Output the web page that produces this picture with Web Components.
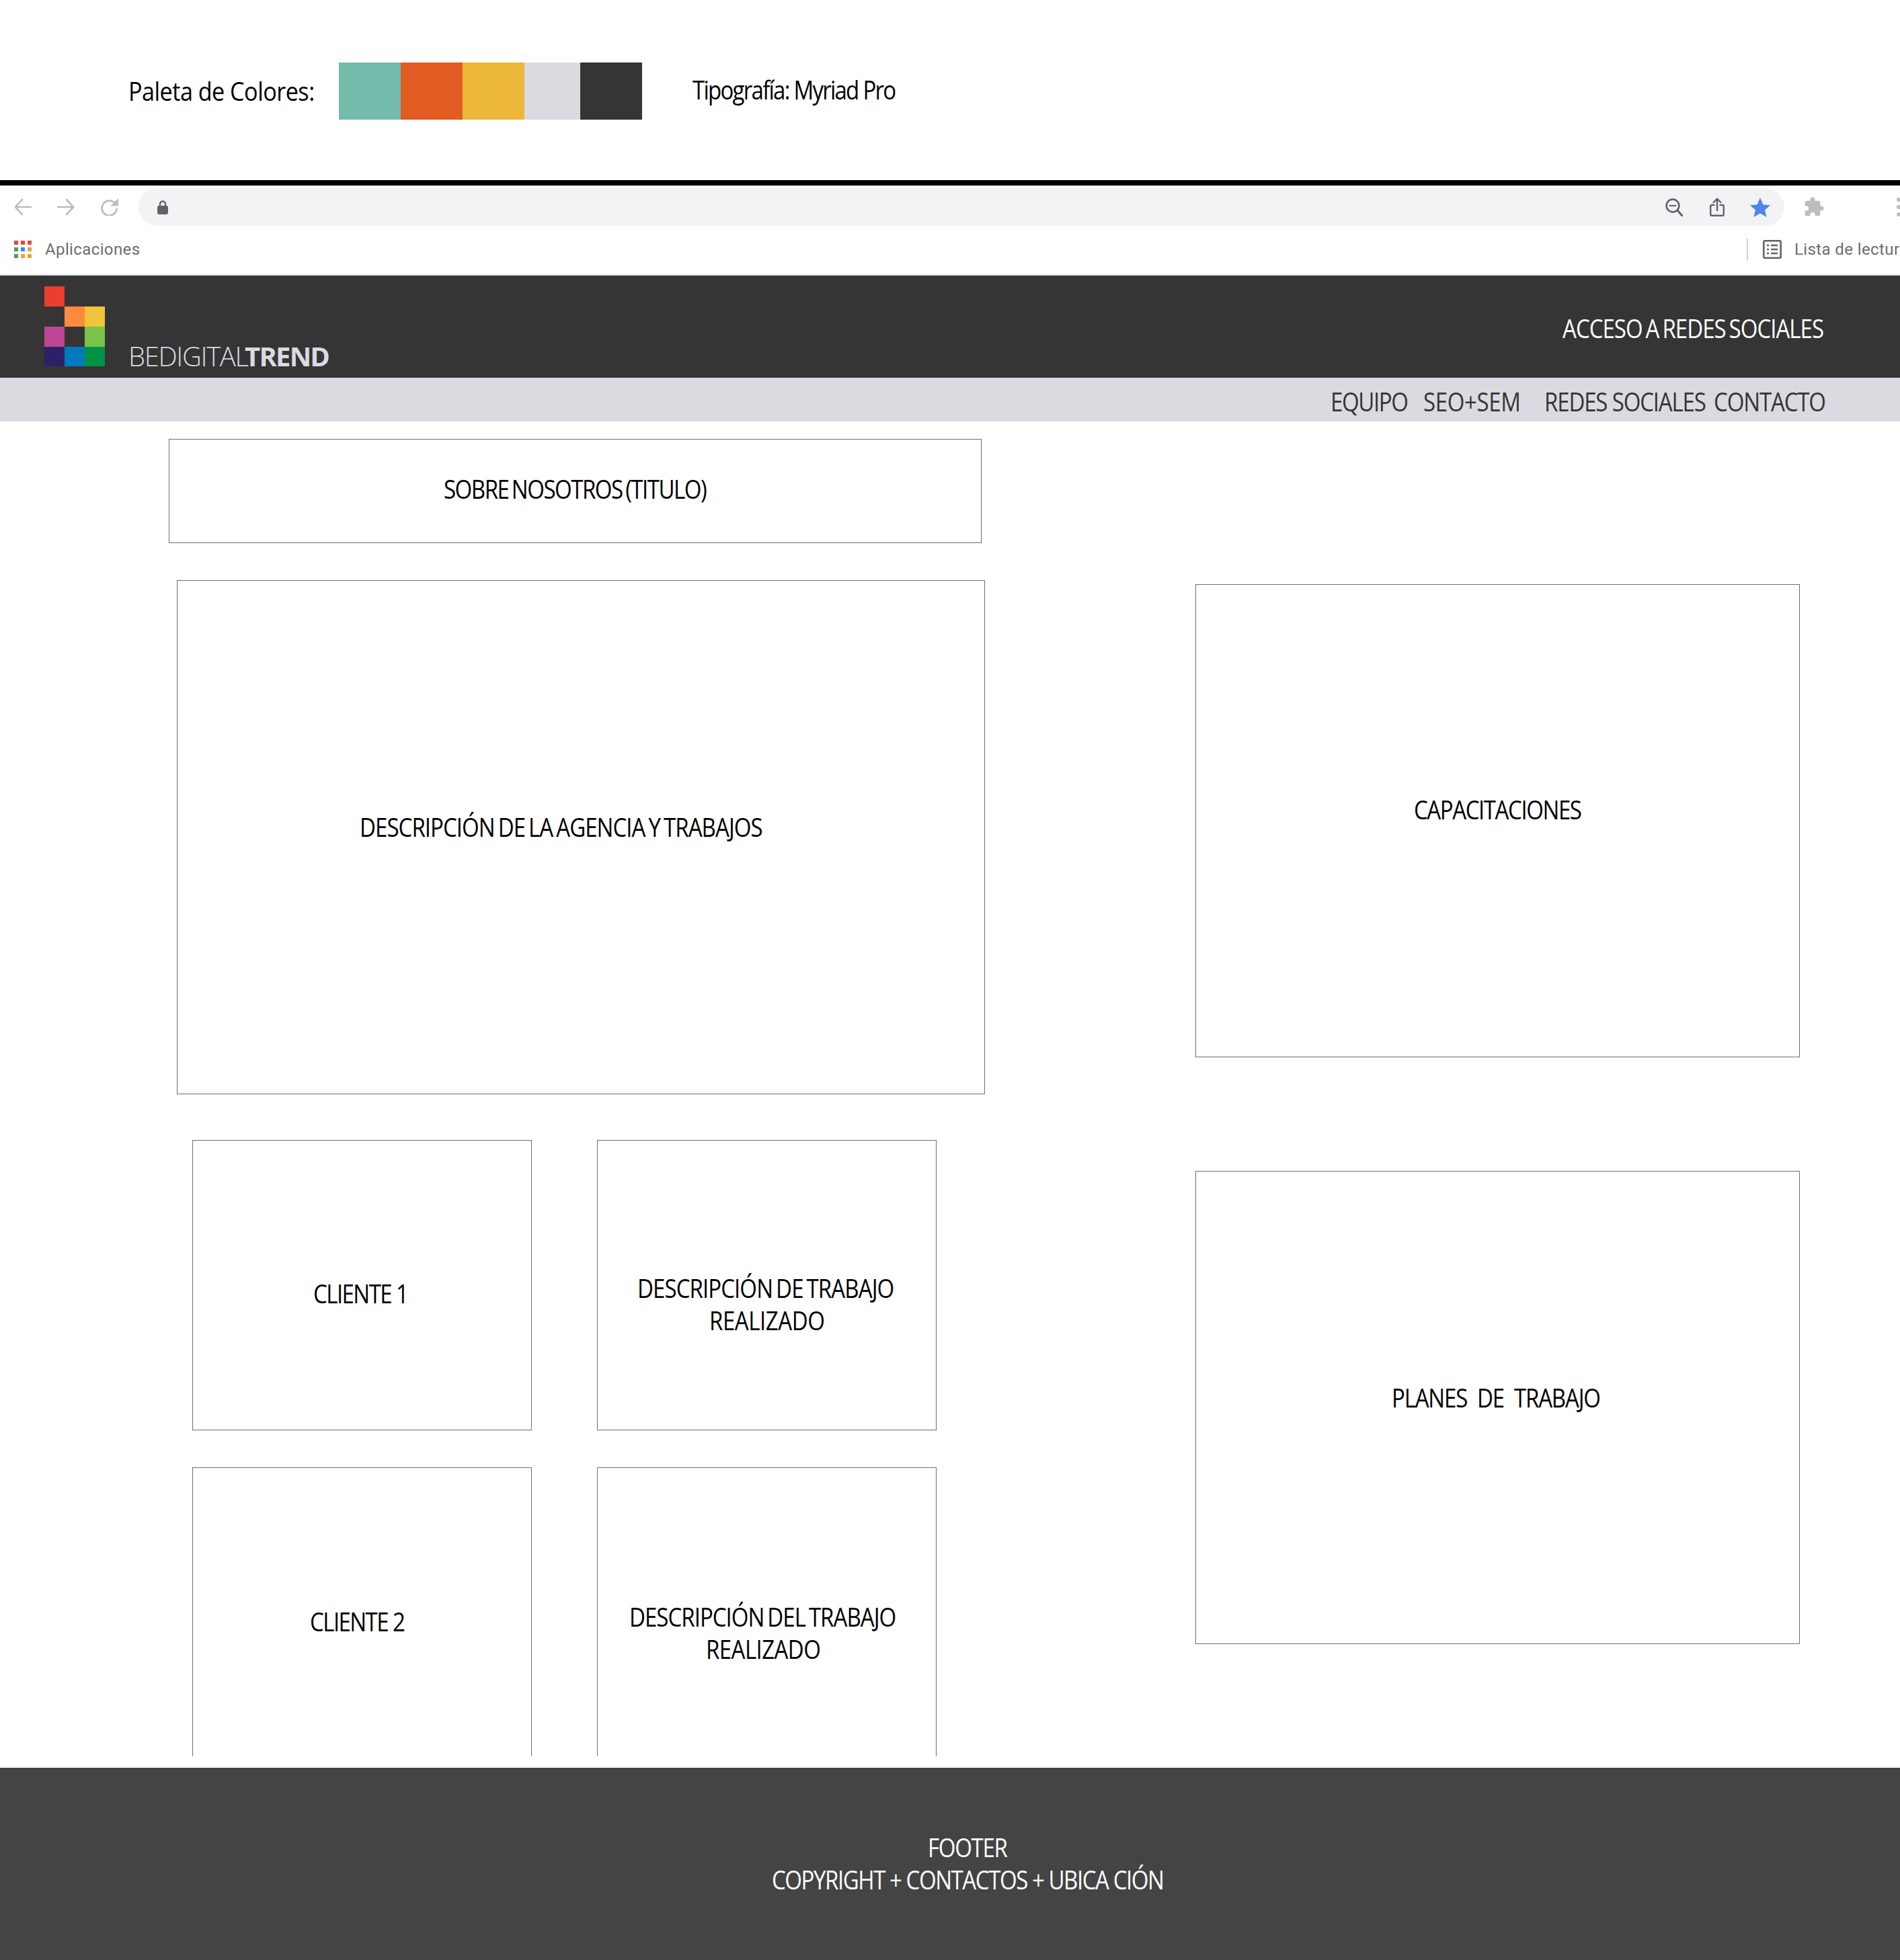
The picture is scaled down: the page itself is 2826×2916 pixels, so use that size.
<!DOCTYPE html>
<html lang="es"><head><meta charset="utf-8"><title>Wireframe</title>
<style>
html,body{margin:0;padding:0;background:#fff}
body{width:2826px;height:2916px;overflow:hidden;font-family:"Open Sans","Liberation Sans",sans-serif;font-size:38px;line-height:48px;color:#000}
.ws{word-spacing:-3px}
</style></head><body>
<x-palette>
  <x-t slot="label" style="--w:277px;--ls:-.6px;--sx:.9">Paleta de Colores:</x-t>
  <x-t slot="type" style="--w:303px;--ls:-2.03px">Tipografía: Myriad Pro</x-t>
</x-palette>
<x-browser>
  <x-t slot="apps" class="ui" style="--w:141px;--ls:.38px;--sx:1">Aplicaciones</x-t>
  <x-t slot="list" class="ui" style="--w:156px;--ls:.39px;--sx:1">Lista de lectur</x-t>
</x-browser>
<x-site-header>
  <x-t slot="a" class="b1" style="--w:173px;--ls:-1.38px;--sx:1">BEDIGITAL</x-t>
  <x-t slot="b" class="b2" style="--w:127px;--ls:-1.78px;--sx:1">TREND</x-t>
  <x-t slot="social" class="ws" style="--w:389px;--ls:-1.17px">ACCESO A REDES SOCIALES</x-t>
</x-site-header>
<x-nav>
  <x-t style="--w:116px;--ls:-1.61px">EQUIPO</x-t>
  <x-t style="--w:145px;--ls:-.45px;margin-left:22px">SEO+SEM</x-t>
  <x-t style="--w:241px;--ls:-1.37px;margin-left:35px">REDES SOCIALES</x-t>
  <x-t style="--w:167px;--ls:-1.36px;margin-left:11px">CONTACTO</x-t>
</x-nav>
<x-main>
  <x-stack slot="left" style="padding-top:26px">
    <x-box style="margin-left:251px;width:1209px;height:155px;padding-bottom:8px"><x-t class="ws" style="--w:392px;--ls:-1.74px">SOBRE NOSOTROS (TITULO)</x-t></x-box>
    <x-box style="margin:55px 0 0 263px;width:1202px;height:765px;padding:0 59px 32px 0"><x-t class="ws" style="--w:600px;--ls:-1.13px">DESCRIPCIÓN DE LA AGENCIA Y TRABAJOS</x-t></x-box>
    <x-cards style="margin:68px 0 0 286px">
      <x-box style="height:432px;padding:24px 3px 0 0"><x-t style="--w:142px;--ls:-1.82px">CLIENTE 1</x-t></x-box>
      <x-box style="height:432px;padding:56px 0 0 0"><x-t class="ws" style="--w:385px;--ls:-1.09px">DESCRIPCIÓN DE TRABAJO</x-t><x-t style="--w:172px;--ls:-.53px">REALIZADO</x-t></x-box>
      <x-box open style="height:430px;padding:26px 13px 0 0"><x-t style="--w:142px;--ls:-1.83px">CLIENTE 2</x-t></x-box>
      <x-box open style="height:430px;padding:60px 10px 0 0"><x-t class="ws" style="--w:400px;--ls:-1.16px">DESCRIPCIÓN DEL TRABAJO</x-t><x-t style="--w:171px;--ls:-.68px">REALIZADO</x-t></x-box>
    </x-cards>
  </x-stack>
  <x-stack slot="right" style="padding-top:242px">
    <x-box style="width:899px;height:704px;padding:0 0 35px 0"><x-t style="--w:250px;--ls:-1.67px">CAPACITACIONES</x-t></x-box>
    <x-box style="width:899px;height:704px;margin-top:169px;padding:0 4px 30px 0"><x-t style="--w:311px;--ls:-1.41px;word-spacing:8.8px">PLANES DE TRABAJO</x-t></x-box>
  </x-stack>
</x-main>
<x-footer>
  <x-t style="--w:119px;--ls:-1.49px">FOOTER</x-t>
  <x-t style="--w:584px;--ls:-1.69px">COPYRIGHT + CONTACTOS + UBICA CIÓN</x-t>
</x-footer>
<script>
const def=(n,css,html)=>customElements.define(n,class extends HTMLElement{
  connectedCallback(){ if(!this.shadowRoot){this.attachShadow({mode:'open'}).innerHTML=`<style>${css}</style>${html}`;} }
});
def('x-t',`:host{display:inline-block;white-space:nowrap;width:var(--w);flex:none}
span{display:inline-block;letter-spacing:var(--ls,0);transform-origin:0 0;transform:scaleX(var(--sx,.87))}
:host(.ui){font:24px/32px Roboto,sans-serif;color:#6b6e72}
:host(.b1){font:300 40px/48px "Open Sans",sans-serif;color:#dbdae0}
:host(.b2){font:700 40px/48px "Open Sans",sans-serif;color:#dbdae0}`,`<span><slot></slot></span>`);
def('x-palette',`:host{display:flex;height:276px;box-sizing:border-box;border-bottom:8px solid #000;align-items:flex-start}
.l{margin:111px 0 0 191px;width:312.6px}.s{display:flex;height:85px;margin-top:93px}.s i{display:block;height:85px}
.t{margin:109px 0 0 75px;}`,
`<div class="l"><slot name="label"></slot></div><div class="s"><i style="width:92.8px;background:#74bbab"></i><i style="width:92px;background:#e25b22"></i><i style="width:92px;background:#edb839"></i><i style="width:83px;background:#dbdae0"></i><i style="width:92px;background:#353535"></i></div><div class="t"><slot name="type"></slot></div>`);
def('x-browser',`:host{display:block;height:134px;box-sizing:border-box;border-bottom:2px solid #dedede;overflow:hidden}
.bar{display:flex;height:69px;align-items:flex-start;padding:4px 0 0 21px;box-sizing:border-box}
svg{display:block;flex:none}
.nav{margin-top:15px}
.url{margin-left:30px;width:2448px;height:56px;border-radius:28px;background:#f1f3f4;display:flex;align-items:center;flex:none}
.marks{display:flex;height:52px;align-items:center;padding-left:21px}
.left{flex:1;display:flex;align-items:center}.right{flex:0 0 228px;overflow:hidden;display:flex;align-items:center;height:32px;white-space:nowrap}
.lbl{display:flex;line-height:32px}
`,
`<div class="bar">
<svg class="nav" width="26" height="26" viewBox="0 0 26 26" fill="none" stroke="#bdbdbd" stroke-width="2.6" stroke-linecap="round" stroke-linejoin="round"><path d="M25 13H2M12 2 1.8 13 12 24"/></svg>
<svg class="nav" style="margin-left:38px" width="26" height="26" viewBox="0 0 26 26" fill="none" stroke="#bdbdbd" stroke-width="2.6" stroke-linecap="round" stroke-linejoin="round"><path d="M1 13H24M14 2 24.2 13 14 24"/></svg>
<svg class="nav" style="margin-left:38px" width="27" height="26" viewBox="0 0 27 26" fill="none"><path d="M22 7.5A11 11 0 1 0 24.600 15" stroke="#bdbdbd" stroke-width="2.800"/><path d="M27 0v11.500H15.500z" fill="#bdbdbd"/></svg>
<div class="url">
<svg style="margin-left:28px" width="16" height="21" viewBox="0 0 16 21" fill="none"><path d="M4 9V5.500a4 4 0 0 1 8 0V9" stroke="#5f6368" stroke-width="2.400"/><rect y="8" width="16" height="13" rx="2.400" fill="#5f6368"/></svg>
<svg style="margin-left:2227px" width="26" height="27" viewBox="0 0 26 27" fill="none" stroke="#5f6368" stroke-linecap="round"><circle cx="11" cy="11" r="9.400" stroke-width="2.600"/><path d="M6.500 11h9" stroke-width="2"/><path d="M18 18l7 8" stroke-width="3"/></svg>
<svg style="margin-left:40px" width="22" height="28" viewBox="0 0 22 28" fill="none" stroke="#5f6368" stroke-width="2.400" stroke-linecap="round" stroke-linejoin="round"><path d="M6.500 11H3.200a2 2 0 0 0-2 2v11.800a2 2 0 0 0 2 2h15.600a2 2 0 0 0 2-2V13a2 2 0 0 0-2-2h-3.300M11 19V1.800M5.600 7 11 1.800 16.400 7"/></svg>
<svg style="margin-left:38px" width="30" height="29" viewBox="0 0 30 29"><path fill="#4f83ee" d="M15 0l4.400 10.600 10.600.7-8.100 7.100 2.600 10.600L15 23.200 5.500 29l2.600-10.600L0 11.300l10.600-.7z"/></svg>
</div>
<svg style="margin-left:28px;margin-top:12px" width="32" height="32" viewBox="0 0 24 24"><path fill="#bdbdbd" d="M20.500 11H19V7c0-1.100-.9-2-2-2h-4V3.500C13 2.120 11.880 1 10.500 1S8 2.120 8 3.500V5H4c-1.100 0-1.990.9-1.990 2v3.800H3.500c1.490 0 2.700 1.210 2.700 2.700s-1.210 2.700-2.700 2.700H2V20c0 1.100.9 2 2 2h3.800v-1.500c0-1.490 1.210-2.700 2.700-2.700 1.490 0 2.700 1.210 2.700 2.700V22H17c1.100 0 2-.9 2-2v-4h1.500c1.380 0 2.500-1.120 2.500-2.500S21.880 11 20.500 11z"/></svg>
<svg style="margin-left:107px;margin-top:13px" width="6" height="30" viewBox="0 0 6 30" fill="#bdbdbd"><circle cx="3" cy="4" r="3"/><circle cx="3" cy="15" r="3"/><circle cx="3" cy="26" r="3"/></svg>
</div>
<div class="marks"><div class="left">
<svg width="26" height="26" viewBox="0 0 26 26"><g fill="#e8453c"><rect width="6" height="6"/><rect x="10" width="6" height="6"/><rect x="20" width="6" height="6"/></g><rect y="10" width="6" height="6" fill="#4f9d5f"/><rect x="10" y="10" width="6" height="6" fill="#4285f4"/><rect x="20" y="10" width="6" height="6" fill="#e8a33a"/><rect y="20" width="6" height="6" fill="#4f9d5f"/><rect x="10" y="20" width="6" height="6" fill="#e8a33a"/><rect x="20" y="20" width="6" height="6" fill="#e8a33a"/></svg>
<span class="lbl" style="margin-left:20px"><slot name="apps"></slot></span></div>
<div class="right"><span style="flex:none;width:2px;height:32px;background:#cfcfcf"></span>
<svg style="margin-left:22px;flex:none" width="28" height="28" viewBox="0 0 28 28" fill="none" stroke="#5f6368"><rect x="1.300" y="1.300" width="25.400" height="25.400" rx="2" stroke-width="2.600"/><path d="M6 8h3M12 8h10M6 14h3M12 14h10M6 20h3M12 20h10" stroke-width="2.600"/></svg>
<span class="lbl" style="margin-left:19px;flex:none"><slot name="list"></slot></span></div></div>`);
def('x-site-header',`:host{display:flex;height:152px;background:#353535;box-sizing:border-box;padding:16px 0 0 66px;align-items:flex-start}
.logo{display:grid;grid-template-columns:repeat(3,30px);grid-template-rows:30px 30px 30px 29px;flex:none}
.brand{display:flex;margin:80px 0 0 35px;flex:none}
.soc{margin:38px 0 0 auto;padding-right:113px;color:#fff}`,
`<div class="logo"><i style="background:#ea3e30"></i><i></i><i></i><i></i><i style="background:#ff8a3d"></i><i style="background:#f0c43c"></i><i style="background:#bd4695"></i><i></i><i style="background:#7bc34b"></i><i style="background:#2c2169"></i><i style="background:#0079bd"></i><i style="background:#009245"></i></div><div class="brand"><slot name="a"></slot><slot name="b"></slot></div><div class="soc"><slot name="social"></slot></div>`);
def('x-nav',`:host{display:flex;height:65px;background:#dbdae0;color:#353535;justify-content:flex-end;padding:11px 110px 0 0;box-sizing:border-box}`,`<slot></slot>`);
def('x-main',`:host{display:grid;grid-template-columns:1778px 1fr;height:2003px;overflow:hidden}`,`<slot name="left"></slot><slot name="right"></slot>`);
def('x-stack',`:host{display:flex;flex-direction:column;align-items:flex-start;box-sizing:border-box}`,`<slot></slot>`);
def('x-cards',`:host{display:grid;grid-template-columns:505px 505px;column-gap:97px;row-gap:55px}`,`<slot></slot>`);
def('x-box',`:host{display:flex;flex-direction:column;align-items:center;justify-content:center;box-sizing:border-box;border:1px solid #6e6e6e;flex:none}:host([open]){border-bottom:none}`,`<slot></slot>`);
def('x-footer',`:host{display:flex;flex-direction:column;align-items:center;height:286px;background:#444;color:#fff;padding:94px 0 0 53px;box-sizing:border-box}`,`<slot></slot>`);
</script>
</body></html>
